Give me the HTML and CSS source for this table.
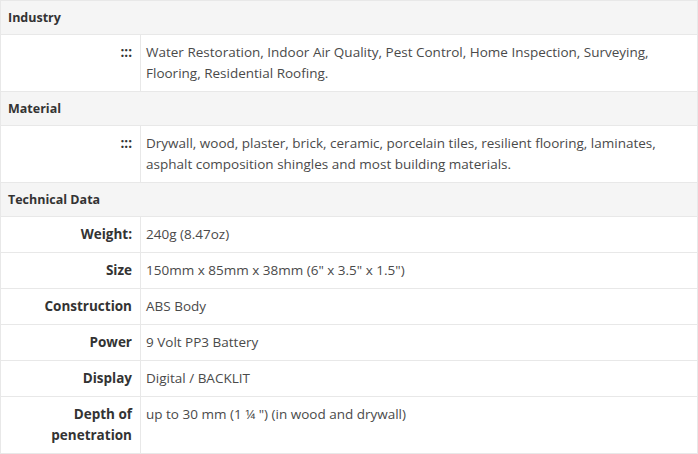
FILE: index.html
```html
<!DOCTYPE html>
<html>
<head>
<meta charset="utf-8">
<link rel="stylesheet" href="styles.css">
</head>
<body>
<table class="spec">
  <tbody>
    <tr class="group"><th colspan="2">Industry</th></tr>
    <tr>
      <td class="label">:::</td>
      <td class="value">Water Restoration, Indoor Air Quality, Pest Control, Home Inspection, Surveying, Flooring, Residential Roofing.</td>
    </tr>
    <tr class="group"><th colspan="2">Material</th></tr>
    <tr>
      <td class="label">:::</td>
      <td class="value">Drywall, wood, plaster, brick, ceramic, porcelain tiles, resilient flooring, laminates, asphalt composition shingles and most building materials.</td>
    </tr>
    <tr class="group"><th colspan="2">Technical Data</th></tr>
    <tr><td class="label">Weight:</td><td class="value">240g (8.47oz)</td></tr>
    <tr><td class="label">Size</td><td class="value">150mm x 85mm x 38mm (6" x 3.5" x 1.5")</td></tr>
    <tr><td class="label">Construction</td><td class="value">ABS Body</td></tr>
    <tr><td class="label">Power</td><td class="value">9 Volt PP3 Battery</td></tr>
    <tr><td class="label">Display</td><td class="value">Digital / BACKLIT</td></tr>
    <tr><td class="label">Depth of penetration</td><td class="value">up to 30 mm (1 ¼ ") (in wood and drywall)</td></tr>
  </tbody>
</table>
</body>
</html>
```

FILE: styles.css
```css
html, body {
  margin: 0;
  padding: 0;
  background: #fff;
}
body {
  font-family: "Open Sans", "Liberation Sans", sans-serif;
  color: #444;
}
.spec {
  width: 100%;
  border-collapse: collapse;
  border: 1px solid #e8e8e8;
}
.spec th,
.spec td {
  border: 1px solid #e8e8e8;
  vertical-align: top;
}
.group th {
  background: #f5f5f5;
  text-align: left;
  font-size: 12.5px;
  font-weight: 700;
  color: #333;
  line-height: 21px;
  padding: 6px 8px 6px 7px;
}
.label {
  width: 123px;
  text-align: right;
  font-size: 13.5px;
  font-weight: 700;
  color: #333;
  line-height: 21px;
  padding: 7px 8px;
}
.value {
  font-size: 13.5px;
  line-height: 21px;
  padding: 7px 6px 7px 5px;
  color: #4a4a4a;
}
```
